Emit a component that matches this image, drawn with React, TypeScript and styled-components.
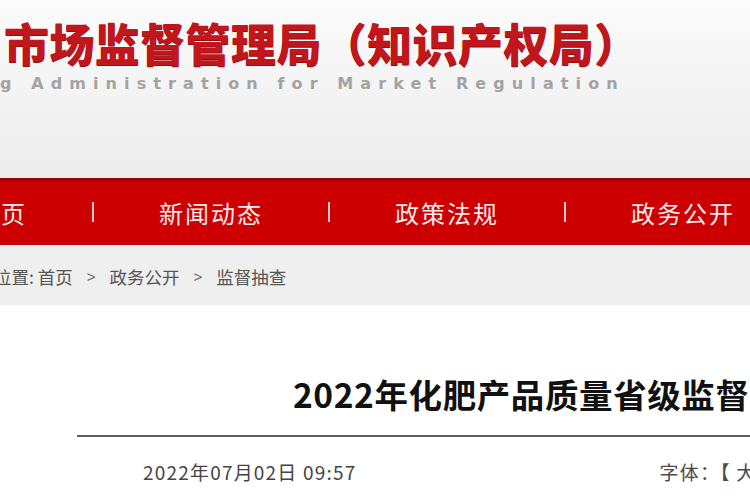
import styled, { createGlobalStyle } from "styled-components";

const GlobalStyle = createGlobalStyle`
  html, body {
    margin: 0;
    padding: 0;
    background: #ffffff;
    overflow: hidden;
  }
  body {
    font-family: "Noto Sans CJK SC", "Noto Sans", sans-serif;
  }
`;

const Page = styled.div`
  width: 750px;
  height: 500px;
  overflow: hidden;
  display: flex;
  flex-direction: column;
`;

const Banner = styled.header`
  height: 178px;
  box-sizing: border-box;
  padding: 17px 0 0 4px;
  background: linear-gradient(180deg, #fbfbfb 0%, #f3f3f3 55%, #ececec 100%);
  overflow: hidden;
  white-space: nowrap;
`;

const SiteName = styled.h1`
  margin: 0;
  font-size: 45px;
  line-height: 52px;
  font-weight: 900;
  color: #c2161d;
  letter-spacing: 0.4px;
  text-shadow: 0 1px 0 #8e0d12;
`;

const SiteNameEn = styled.div`
  margin: 5px 0 0 -4px;
  font-family: "DejaVu Sans", "Liberation Sans", sans-serif;
  font-size: 16px;
  line-height: 20px;
  font-weight: bold;
  color: #a3a3a3;
  letter-spacing: 7.1px;
`;

const NavBar = styled.nav`
  height: 67px;
  box-sizing: border-box;
  border-top: 3px solid #a10000;
  border-bottom: 2px solid #b80a0f;
  background: #cc0000;
  display: flex;
  align-items: center;
  gap: 65px;
  margin-left: -25px;
  white-space: nowrap;
  box-shadow: 0 2px 0 #f2c8cc;
`;

const NavItem = styled.span`
  font-size: 24px;
  letter-spacing: 2px;
  color: #ffecec;
  flex-shrink: 0;
`;

const NavSep = styled.span`
  width: 2px;
  height: 20px;
  background: #f6c9cc;
  flex-shrink: 0;
`;

const Crumbs = styled.div`
  height: 60px;
  box-sizing: border-box;
  padding-top: 2px;
  background: #efefef;
  display: flex;
  align-items: center;
  gap: 14px;
  margin-left: -6px;
  white-space: nowrap;
  font-size: 17.5px;
  color: #555555;
`;

const CrumbArrow = styled.span`
  font-family: "Liberation Sans", sans-serif;
  font-size: 15px;
  color: #666666;
`;

const Article = styled.article`
  flex: 1;
  padding-left: 77px;
  background: #ffffff;
  white-space: nowrap;
  overflow: hidden;
`;

const ArticleTitle = styled.h2`
  margin: 68px 0 0 0;
  padding-left: 216px;
  font-size: 33.5px;
  line-height: 42px;
  font-weight: bold;
  letter-spacing: 0.6px;
  color: #111111;
`;

const Rule = styled.div`
  margin-top: 20px;
  height: 2px;
  background: #5e5e5e;
`;

const Meta = styled.div`
  margin-top: 22px;
  padding-left: 66px;
  display: flex;
  align-items: center;
  gap: 303px;
  font-size: 19px;
  letter-spacing: 1.2px;
  line-height: 26px;
  color: #444444;
`;

const FontSizer = styled.span`
  color: #4a4a4a;
  flex-shrink: 0;
`;

export default function App() {
  return (
    <>
      <GlobalStyle />
      <Page>
        <Banner>
          <SiteName>市场监督管理局（知识产权局）</SiteName>
          <SiteNameEn>g Administration for Market Regulation</SiteNameEn>
        </Banner>
        <NavBar>
          <NavItem>首页</NavItem>
          <NavSep />
          <NavItem>新闻动态</NavItem>
          <NavSep />
          <NavItem>政策法规</NavItem>
          <NavSep />
          <NavItem>政务公开</NavItem>
          <NavSep />
          <NavItem>互动交流</NavItem>
        </NavBar>
        <Crumbs>
          <span>位置: 首页</span>
          <CrumbArrow>&gt;</CrumbArrow>
          <span>政务公开</span>
          <CrumbArrow>&gt;</CrumbArrow>
          <span>监督抽查</span>
        </Crumbs>
        <Article>
          <ArticleTitle>2022年化肥产品质量省级监督抽查结果</ArticleTitle>
          <Rule />
          <Meta>
            <span>2022年07月02日 09:57</span>
            <FontSizer>字体：【 大 中 小 】</FontSizer>
          </Meta>
        </Article>
      </Page>
    </>
  );
}
